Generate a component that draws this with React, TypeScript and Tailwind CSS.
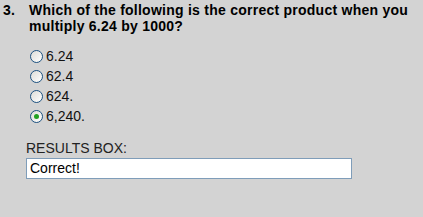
import React from "react";

const options = ["6.24", "62.4", "624.", "6,240."];

function Radio({ checked }: { checked?: boolean }) {
  return (
    <span className="relative flex h-[13px] w-[13px] shrink-0 items-center justify-center rounded-full border border-[#1c5180] bg-gradient-to-br from-[#dcdcd7] to-white">
      {checked && <span className="h-[5px] w-[5px] rounded-full bg-[#21a121]" />}
    </span>
  );
}

export default function App() {
  return (
    <div
      className="h-[217px] w-[423px] bg-[#d3d3d3] text-black"
      style={{ fontFamily: '"Liberation Sans", Arial, sans-serif' }}
    >
      <div className="flex pt-[2px] text-[14px] font-bold leading-[16px] tracking-[0.25px]">
        <div className="w-[29px] shrink-0 pl-[3px]">3.</div>
        <div>Which of the following is the correct product when you multiply 6.24 by 1000?</div>
      </div>

      <div className="mt-[12px] flex flex-col pl-[30px] text-[14px]">
        {options.map((o, i) => (
          <label key={o} className="flex h-[20px] items-center gap-[3px]">
            <Radio checked={i === 3} />
            <span className="text-[#111]">{o}</span>
          </label>
        ))}
      </div>

      <div className="mt-[14px] pl-[26px] text-[14px] leading-[16px] text-[#222]">RESULTS BOX:</div>
      <div className="ml-[26px] mt-[2px] flex h-[21px] w-[326px] items-center border border-[#7f9db9] bg-white pl-[3px] text-[14px] text-black">
        Correct!
      </div>
    </div>
  );
}
